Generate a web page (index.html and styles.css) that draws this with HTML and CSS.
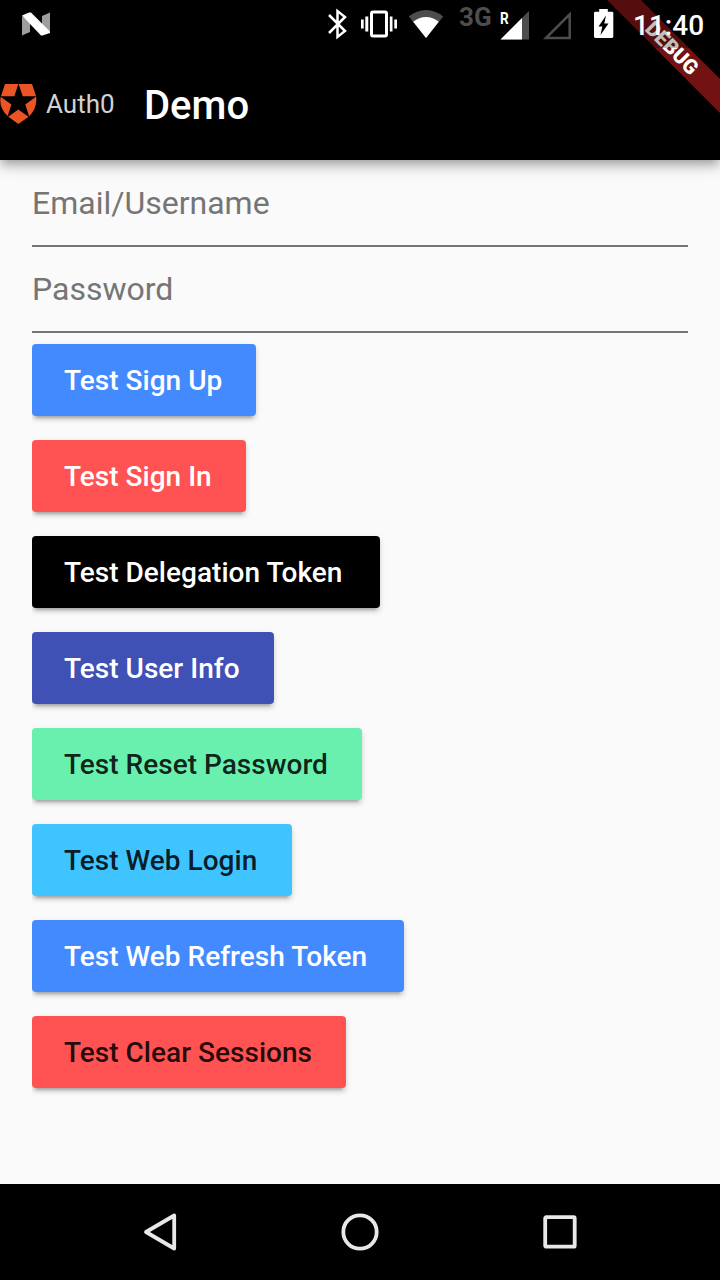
FILE: index.html
```html
<!DOCTYPE html>
<html lang="en">
<head>
<meta charset="utf-8">
<title>Auth0 Demo</title>
<link rel="stylesheet" href="styles.css">
</head>
<body>
<div class="screen">
  <header class="header">
    <div class="status">
      <svg class="notification" width="28" height="48" viewBox="0 0 28 48"><path fill="#9e9e9e" d="M0 16 8 22V32L0 35.500ZM28 12.500V32L20 25V16Z"/><path fill="#fff" d="M0 15.500 7 12.500H9L28 31.500V33L20.500 35.500H19Z"/></svg>
      <svg width="30" height="48" viewBox="322 0 30 48"><path fill="none" stroke="#fff" stroke-width="2.500" d="M329 15 345 31 337.500 37V11L345 17 329 33"/></svg>
      <svg width="50" height="48" viewBox="352 0 50 48"><rect x="371.500" y="12" width="15" height="24" rx="1.500" fill="none" stroke="#fff" stroke-width="3"/><path fill="#fff" d="M361 19.500h2.700v9H361ZM365.300 16.500h3v15h-3ZM389.800 16.500h2.700v15h-2.700ZM394.300 19.500h2.700v9h-2.700Z"/></svg>
      <svg width="48" height="48" viewBox="402 0 48 48"><path fill="#4d4d4d" d="M426 38 408.800 16.500Q417 10 426 10T443.200 16.500Z"/><path fill="#fff" d="M426 38 413.200 21.700Q419 17 426 17T438.800 21.700Z"/></svg>
      <span class="network">3G</span>
      <span class="roaming">R</span>
      <svg width="22" height="48" viewBox="512 0 22 48" class="signal"><path fill="#4d4d4d" d="M500.500 39.500 529 11V39.500Z"/><path fill="#fff" d="M500.500 39.500 522 18V39.500Z"/></svg>
      <svg width="52" height="48" viewBox="534 0 52 48"><path fill="none" stroke="#4d4d4d" stroke-width="2.500" d="M546 38 569.700 14.300V38Z"/></svg>
      <svg width="48" height="48" viewBox="586 0 48 48"><path fill="#fff" d="M594 13q0-1.300 1.300-1.300h3.900V9h8.600v2.700h4.200q1.300 0 1.300 1.300v23.600q0 1.300-1.300 1.300h-16.700q-1.300 0-1.300-1.300Z"/><path fill="#000" d="M606 15.500 598.500 26.500h3.800L600.500 35 608.500 23.500h-4.200Z"/></svg>
      <time class="clock">11:40</time>
    </div>
    <div class="appbar">
      <svg class="shield" width="37" height="42" viewBox="0 0 37 42"><path fill="#eb5424" d="M5 1H32L36 13Q38 24 29 33.500L18.300 41 8 33.500Q-2 24 1 13Z"/><path fill="#000" d="M18.500.5 22.700 13.300H36.500L25.300 21.400 29.500 34.500 18.300 26.500 7.200 34.500 11.400 21.400 0 13.300H14.300Z"/></svg>
      <span class="brand">Auth0</span>
      <h1 class="title">Demo</h1>
    </div>
    <div class="banner"><span>DEBUG</span></div>
    <div class="shade"></div>
  </header>
  <main class="content">
    <div class="field"><span>Email/Username</span></div>
    <div class="field"><span>Password</span></div>
    <div class="actions">
      <button class="btn blue signup">Test Sign Up</button>
      <button class="btn red signin">Test Sign In</button>
      <button class="btn black delegation">Test Delegation Token</button>
      <button class="btn indigo info">Test User Info</button>
      <button class="btn green reset">Test Reset Password</button>
      <button class="btn cyan login">Test Web Login</button>
      <button class="btn blue refresh">Test Web Refresh Token</button>
      <button class="btn red dark clear">Test Clear Sessions</button>
    </div>
  </main>
  <nav class="nav">
    <svg width="40" height="40" viewBox="0 0 40 40"><path d="M6 20 34.200 3.500V36.500Z"/></svg>
    <svg width="40" height="40" viewBox="0 0 40 40"><circle cx="20" cy="20" r="16.700"/></svg>
    <svg width="40" height="40" viewBox="0 0 40 40"><rect x="5.200" y="5.200" width="29.500" height="29.500" rx="1"/></svg>
  </nav>
</div>
</body>
</html>
```

FILE: styles.css
```css
* { box-sizing: border-box; }
body { margin: 0; font-family: Roboto, sans-serif; }
.screen {
  width: 720px;
  height: 1280px;
  display: flex;
  flex-direction: column;
  overflow: hidden;
  background: #fafafa;
}
.header {
  position: relative;
  flex: none;
  height: 160px;
  background: #000;
  color: #fff;
  box-shadow: 0 4px 8px -2px rgba(0,0,0,.2), 0 8px 10px rgba(0,0,0,.14), 0 2px 20px rgba(0,0,0,.12);
}
.status {
  display: flex;
  align-items: center;
  height: 48px;
  padding-left: 22px;
}
.status svg { flex: none; }
.notification { margin-right: 272px; }
.network {
  width: 50px;
  padding-left: 9px;
  margin-top: -14px;
  font-size: 26px;
  line-height: 30px;
  font-weight: 700;
  color: #4d4d4d;
}
.roaming {
  width: 12px;
  margin-top: -13px;
  font-size: 17px;
  line-height: 20px;
  font-weight: 700;
  transform: scaleX(.8);
  transform-origin: left;
}
.signal { overflow: visible; }
.clock {
  position: relative;
  z-index: 3;
  margin-left: -1px;
  font-size: 28px;
  font-weight: 500;
  line-height: 48px;
  padding-top: 4px;
}
.appbar {
  display: flex;
  align-items: center;
  height: 112px;
}
.brand {
  width: 107px;
  padding-left: 9px;
  font-size: 26px;
  line-height: 34px;
  color: #d0d2d3;
}
.title {
  margin: 4px 0 0;
  font-size: 40px;
  font-weight: 500;
  line-height: 48px;
}
.banner {
  position: absolute;
  z-index: 1;
  inset: 0 0 0 auto;
  width: 160px;
  overflow: hidden;
}
.banner span {
  position: absolute;
  left: 12px;
  top: 36px;
  width: 200px;
  height: 24px;
  background: #731212;
  transform: rotate(45deg);
  text-align: center;
  font-size: 20.4px;
  font-weight: 900;
  line-height: 24px;
}
.shade {
  position: absolute;
  z-index: 2;
  inset: 0 0 auto;
  height: 48px;
  background: rgba(0,0,0,.25);
}
.status > :not(.clock) { position: relative; z-index: 3; }
.content { flex: 1; padding: 0 32px; }
.field {
  height: 86px;
  padding-top: 23px;
  border-bottom: 2px solid #757575;
  font-size: 32px;
  line-height: 38px;
  color: #757575;
}
.field:first-child { height: 87px; padding-top: 24px; }
.actions {
  display: flex;
  flex-direction: column;
  align-items: flex-start;
  gap: 24px;
  padding-top: 11px;
  clip-path: inset(0 -20px -20px 0);
}
.btn {
  height: 72px;
  padding: 2px 0 0 32px;
  border: 0;
  border-radius: 4px;
  font: 500 28px/34px Roboto, sans-serif;
  letter-spacing: .02px;
  text-align: left;
  white-space: nowrap;
  color: #fff;
  box-shadow: 0 6px 2px -4px rgba(0,0,0,.18), 0 4px 4px rgba(0,0,0,.13), 0 2px 8px rgba(0,0,0,.07);
}
.blue { background: #448aff; }
.red { background: #ff5252; }
.black { background: #000; }
.indigo { background: #3f51b5; }
.green { background: #69f0ae; color: rgba(0,0,0,.87); }
.cyan { background: #40c4ff; color: rgba(0,0,0,.87); }
.dark { color: rgba(0,0,0,.87); }
.signup { width: 224px; }
.signin { width: 214px; }
.delegation { width: 348px; }
.info { width: 242px; }
.reset { width: 330px; }
.login { width: 260px; }
.refresh { width: 372px; }
.clear { width: 314px; }
.nav {
  flex: none;
  display: flex;
  justify-content: space-between;
  align-items: center;
  height: 96px;
  padding: 0 140px;
  background: #000;
}
.nav svg {
  fill: none;
  stroke: #e8e8e8;
  stroke-width: 3.800;
  stroke-linejoin: round;
}
```
